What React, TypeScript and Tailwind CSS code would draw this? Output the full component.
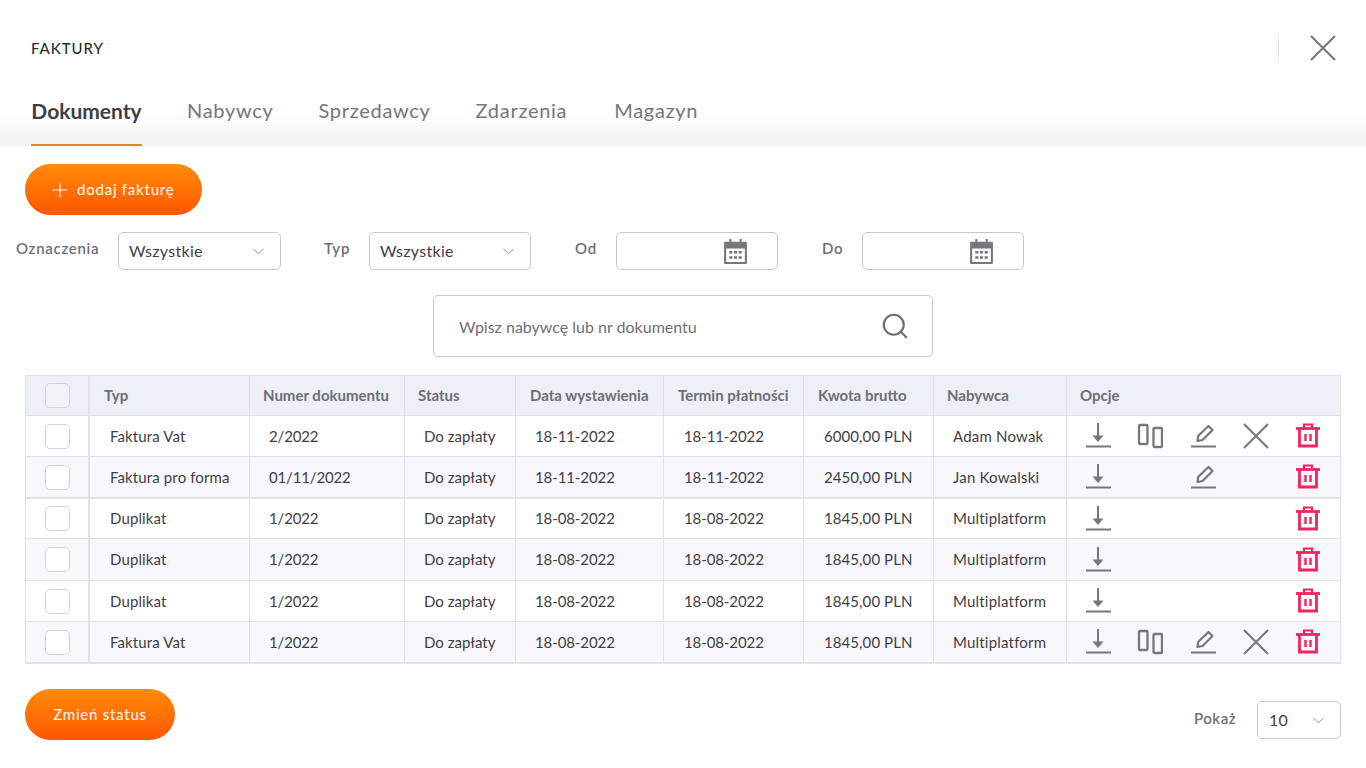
import React from 'react';
import { ChevronDown, Plus, Search } from 'lucide-react';

type Row = {
  typ: string;
  numer: string;
  data: string;
  termin: string;
  kwota: string;
  nabywca: string;
  split?: boolean;
  edit?: boolean;
  cancel?: boolean;
  height: string;
};

const TABS = [
  { label: 'Nabywcy', gap: 'mr-[-1px]' },
  { label: 'Sprzedawcy', gap: 'mr-[-1px]' },
  { label: 'Zdarzenia', gap: 'mr-[1px]' },
  { label: 'Magazyn', gap: '' },
];

const HEADERS = [
  { label: 'Typ', pad: 'pl-[14px]' },
  { label: 'Numer dokumentu', pad: 'pl-[13px]' },
  { label: 'Status', pad: 'pl-[13px]' },
  { label: 'Data wystawienia', pad: 'pl-[14px]' },
  { label: 'Termin płatności', pad: 'pl-[14px]' },
  { label: 'Kwota brutto', pad: 'pl-[14px]' },
  { label: 'Nabywca', pad: 'pl-[13px]' },
  { label: 'Opcje', pad: 'pl-[13px]' },
];

const ROWS: Row[] = [
  { typ: 'Faktura Vat', numer: '2/2022', data: '18-11-2022', termin: '18-11-2022', kwota: '6000,00', nabywca: 'Adam Nowak', split: true, edit: true, cancel: true, height: 'h-[41px]' },
  { typ: 'Faktura pro forma', numer: '01/11/2022', data: '18-11-2022', termin: '18-11-2022', kwota: '2450,00', nabywca: 'Jan Kowalski', edit: true, height: 'h-[41px]' },
  { typ: 'Duplikat', numer: '1/2022', data: '18-08-2022', termin: '18-08-2022', kwota: '1845,00', nabywca: 'Multiplatform', height: 'h-[41px]' },
  { typ: 'Duplikat', numer: '1/2022', data: '18-08-2022', termin: '18-08-2022', kwota: '1845,00', nabywca: 'Multiplatform', height: 'h-[42px]' },
  { typ: 'Duplikat', numer: '1/2022', data: '18-08-2022', termin: '18-08-2022', kwota: '1845,00', nabywca: 'Multiplatform', height: 'h-[41px]' },
  { typ: 'Faktura Vat', numer: '1/2022', data: '18-08-2022', termin: '18-08-2022', kwota: '1845,00', nabywca: 'Multiplatform', split: true, edit: true, cancel: true, height: 'h-[41px]' },
];

const COLS = 'grid grid-cols-[64px_160px_155px_111px_148px_140px_130px_133px_274px]';

function DownloadIcon() {
  return (
    <svg width="26" height="26" viewBox="0 0 26 26" fill="none" stroke="#77757d" strokeWidth="2">
      <path d="M13 0v14" />
      <path d="M7.500 12.500h11L13 19z" fill="#77757d" stroke="none" />
      <path d="M1 23.500h25" />
    </svg>
  );
}

function SplitIcon() {
  return (
    <svg width="26" height="26" viewBox="0 0 26 26" fill="none" stroke="#77757d" strokeWidth="2.300">
      <rect x="2" y="2" width="8.500" height="19" rx="1" />
      <rect x="16.500" y="5" width="8.500" height="19" rx="1" />
    </svg>
  );
}

function EditIcon() {
  return (
    <svg width="26" height="26" viewBox="0 0 26 26" fill="none" stroke="#77757d" strokeWidth="2.200">
      <path d="M7.500 18l.8-5.300L18.500 3l4 4L12.500 17z" strokeLinejoin="round" />
      <path d="M1 23.500h25" strokeWidth="2" />
    </svg>
  );
}

function CrossIcon({ size }: { size: number }) {
  return (
    <svg width={size} height={size} viewBox="0 0 26 26" fill="none" stroke="#77757d" strokeWidth="2">
      <path d="M1 1l24 24M25 1L1 25" />
    </svg>
  );
}

function TrashIcon() {
  return (
    <svg width="26" height="26" viewBox="0 0 26 26" fill="none" stroke="#f0245f" strokeWidth="2.800">
      <path d="M1 5.500h24" />
      <path d="M9 5V1.500h8V5" strokeWidth="2.200" />
      <path d="M4.500 6v17h17V6" />
      <path d="M10.500 11v7M15.500 11v7" strokeWidth="2.400" />
    </svg>
  );
}

function CalendarIcon() {
  return (
    <svg width="27" height="27" viewBox="0 0 26 26" fill="#77757d">
      <path d="M7 1h2v4H7zM17 1h2v4h-2z" />
      <path d="M3 3.500h20a1 1 0 0 1 1 1V24a1 1 0 0 1-1 1H3a1 1 0 0 1-1-1V4.500a1 1 0 0 1 1-1zm1 6.500v13h18V10z" fillRule="evenodd" />
      <path d="M7 12.500h3v2.500H7zM11.500 12.500h3v2.500h-3zM16 12.500h3v2.500h-3zM7 17.500h3V20H7zM11.500 17.500h3V20h-3zM16 17.500h3V20h-3z" />
    </svg>
  );
}

function SelectBox({ value, className }: { value: string; className: string }) {
  return (
    <div className={`h-[38px] flex items-center justify-between bg-white border border-[#c9c8cd] rounded-[5px] text-[16px] font-normal tracking-[0.3px] text-[#3f3e44] ${className}`}>
      <span>{value}</span>
      <ChevronDown className="w-[19px] h-[19px] text-[#8f8e94]" strokeWidth={1.25} />
    </div>
  );
}

function DateBox() {
  return (
    <div className="w-[162px] h-[38px] flex items-center justify-end pr-[28px] bg-white border border-[#c9c8cd] rounded-[5px]">
      <CalendarIcon />
    </div>
  );
}

function OrangeButton({ children, className }: { children: React.ReactNode; className: string }) {
  return (
    <button
      type="button"
      className={`h-[51px] flex items-center rounded-full bg-gradient-to-b from-[#ff8a0c] to-[#ff5500] text-[#fff3e2] text-[15px] font-medium tracking-[0.75px] ${className}`}
    >
      {children}
    </button>
  );
}

function Cell({ children, className = 'pl-[19px]' }: { children?: React.ReactNode; className?: string }) {
  return <div className={`flex items-center border-r border-[#e1e1e8] whitespace-nowrap ${className}`}>{children}</div>;
}

function Checkbox({ bg }: { bg: string }) {
  return <div className={`w-[25px] h-[25px] rounded-[5px] border border-[#d3d2d8] ${bg}`} />;
}

export default function App() {
  return (
    <div className="w-[1366px] h-[768px] overflow-hidden bg-white font-['Lato',sans-serif] text-[#3f3e44]">
      <div className="h-[146px] bg-gradient-to-b from-white from-[75%] to-[#f3f3f6] flex flex-col">
        <div className="flex items-center justify-between h-[96px] pl-[31px] pr-[30px]">
          <h1 className="text-[15px] font-medium tracking-[0.95px] text-[#2f2e33]">FAKTURY</h1>
          <div className="flex items-center gap-[31px]">
            <div className="w-px h-[26px] bg-[#e8e8ea]" />
            <CrossIcon size={26} />
          </div>
        </div>
        <div className="flex pl-[31px] gap-[46px] h-[50px] text-[20px] tracking-[0.7px] leading-[29px]">
          <div className="w-[111px] -mr-px h-full flex justify-center border-b-2 border-[#f57f17] text-[21px] font-bold text-[#3f3e44] tracking-normal whitespace-nowrap">Dokumenty</div>
          {TABS.map((t) => (
            <div key={t.label} className={`text-[#77757d] ${t.gap}`}>{t.label}</div>
          ))}
        </div>
      </div>

      <div className="pl-[25px] pt-[18px]">
        <OrangeButton className="w-[177px] pl-[23px] gap-[5px]">
          <Plus className="w-[24px] h-[24px]" strokeWidth={1.1} />
          dodaj fakturę
        </OrangeButton>
      </div>

      <div className="flex items-center h-[38px] mt-[17px] pl-[16px] text-[15px] font-semibold text-[#6f6e74] tracking-[0.7px]">
        <span className="w-[102px] -mt-[5px]">Oznaczenia</span>
        <SelectBox value="Wszystkie" className="w-[163px] pl-[10px] pr-[12px]" />
        <span className="ml-[43px] w-[45px] -mt-[5px]">Typ</span>
        <SelectBox value="Wszystkie" className="w-[162px] pl-[10px] pr-[12px]" />
        <span className="ml-[44px] w-[41px] -mt-[5px]">Od</span>
        <DateBox />
        <span className="ml-[44px] w-[40px] -mt-[5px]">Do</span>
        <DateBox />
      </div>

      <div className="flex justify-start pl-[433px] mt-[25px]">
        <div className="w-[500px] h-[62px] flex items-center justify-between pl-[25px] pr-[22px] border border-[#c9c8cd] rounded-[5px] text-[16px] text-[#6f6e74]">
          <span className="pt-px">Wpisz nabywcę lub nr dokumentu</span>
          <Search className="w-[30px] h-[30px] text-[#6f6e74]" strokeWidth={1.7} />
        </div>
      </div>

      <div className="ml-[25px] mt-[18px] w-[1316px] border border-[#e1e1e8] border-b-2 text-[15px]">
        <div className={`${COLS} h-[39px] bg-[#eef0f7] font-bold text-[#6f6e74]`}>
          <Cell className="pl-[19px] border-r-2"><Checkbox bg="bg-[#f2f3f8]" /></Cell>
          {HEADERS.map((h) => (
            <div key={h.label} className={`flex items-center border-r border-[#e1e1e8] last:border-r-0 whitespace-nowrap ${h.pad}`}>{h.label}</div>
          ))}
        </div>
        {ROWS.map((r, i) => (
          <div
            key={i}
            className={`${COLS} ${r.height} border-t ${i === 2 ? 'border-t-2' : ''} border-[#e1e1e8] ${i % 2 === 1 ? 'bg-[#f7f7fc]' : 'bg-white'}`}
          >
            <Cell className="pl-[19px] border-r-2"><Checkbox bg="bg-white" /></Cell>
            <Cell className="pl-[20px] tracking-[0.12px]">{r.typ}</Cell>
            <Cell className="pl-[19px] tracking-[-0.15px]">{r.numer}</Cell>
            <Cell>Do zapłaty</Cell>
            <Cell className="pl-[19px] tracking-[-0.1px]">{r.data}</Cell>
            <Cell className="pl-[20px] tracking-[-0.1px]">{r.termin}</Cell>
            <Cell className="pl-[20px] tracking-[0.08px]">{r.kwota} PLN</Cell>
            <Cell className="pl-[19px] tracking-[0.2px]">{r.nabywca}</Cell>
            <div className="grid grid-cols-[52px_53px_53px_52px_26px] items-center pl-[18px]">
              <DownloadIcon />
              <div>{r.split && <SplitIcon />}</div>
              <div>{r.edit && <EditIcon />}</div>
              <div>{r.cancel && <CrossIcon size={26} />}</div>
              <TrashIcon />
            </div>
          </div>
        ))}
      </div>

      <div className="flex items-end justify-between pl-[25px] pr-[25px] mt-[25px]">
        <OrangeButton className="w-[150px] justify-center">Zmień status</OrangeButton>
        <div className="flex items-center mb-px">
          <span className="w-[63px] text-[15px] font-semibold tracking-[0.5px] text-[#6f6e74] -mt-[3px]">Pokaż</span>
          <SelectBox value="10" className="w-[84px] pl-[11px] pr-[12px]" />
        </div>
      </div>
    </div>
  );
}
